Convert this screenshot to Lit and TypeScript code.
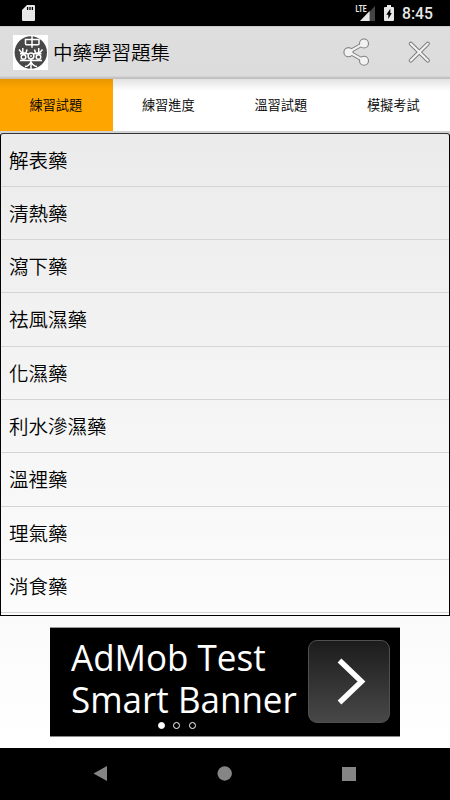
import { LitElement, html, css } from "lit";
import { customElement, state } from "lit/decorators.js";
import { classMap } from "lit/directives/class-map.js";

@customElement("status-bar")
class StatusBar extends LitElement {
  static styles = css`
    :host { display: block; height: 26px; background: #000; }
    svg { display: block; }
    .bar { display: flex; height: 26px; align-items: center; color: #e8e8e8; }
    .card { margin-left: 21px; margin-right: auto; }
    .time { width: 32px; margin: 2px 16px 0 7px; font: 500 15.7px/24px Roboto, sans-serif; white-space: nowrap; }
    .lte { font: 700 9px Roboto, sans-serif; }
  `;
  render() {
    return html`<div class="bar">
      <svg class="card" width="15" height="26" viewBox="21 0 15 26">
        <path fill="#e8e8e8" d="M27 5h7q1 0 1 1v14q0 1-1 1H23q-1 0-1-1V10z" />
        <path stroke="#000" stroke-width="1.3" d="M27.6 7v3M30 7v3M32.4 7v3" />
      </svg>
      <svg width="40" height="26" viewBox="355 0 40 26">
        <path fill="#444" d="M375 6v15h-14.5z" />
        <path fill="#e8e8e8" d="M369.6 11v10h-9.6z" />
        <text class="lte" x="355.6" y="12.4" fill="#e8e8e8" textLength="11" lengthAdjust="spacingAndGlyphs">LTE</text>
        <path fill="#e8e8e8" d="M387 5h4v2h2q1 0 1 1v12q0 1-1 1h-8q-1 0-1-1V8q0-1 1-1h2z" />
        <path fill="#000" d="M390.3 8.7v4.2h1.5l-3.5 6v-4.2h-2z" />
      </svg>
      <span class="time">8:45</span>
    </div>`;
  }
}

@customElement("action-bar")
class ActionBar extends LitElement {
  static styles = css`
    :host { display: block; height: 53px; }
    .bar { box-sizing: border-box; height: 53px; display: flex; align-items: center; padding: 0 18px 1px 13px;
      background: linear-gradient(#c9c9c9 0 1px, #dedede 1px, #dcdcdc 50px, #c9c9c9 51px, #bebebe 53px); }
    svg { display: block; }
    .logo { width: 35px; height: 35px; background: #fff; }
    .title { margin: 4px auto 0 5px; font: 350 19.5px/28px Roboto, "Noto Sans CJK TC", sans-serif; color: #000; }
    .share { margin-right: 36px; }
  `;
  render() {
    return html`<div class="bar">
      <svg class="logo" viewBox="0 0 35 35">
        <circle cx="17.8" cy="17.5" r="16.2" fill="#484848" />
        <g fill="none" stroke="#fff" stroke-width="1.5">
          <path d="M12.5 4.5v4.2q0 1 1 1h11.5q1 0 1-1v-4.2zM19 .8v12" />
          <path d="M6 14.5l3 3.5h4l1-3.5M9.8 13v5M7 18.7h8M29.5 14.5l-3 3.5h-4l-1-3.5M25.7 13v5M20.5 18.7h8" />
          <circle cx="10.5" cy="22" r="2.3" />
          <circle cx="18" cy="21" r="2.9" />
          <circle cx="25.5" cy="22" r="2.3" />
          <path d="M7 25.5h22M18 24v10M18 27q-2 4-6 4.5M18 27q2 4 6 4.5" />
        </g>
        <circle cx="18" cy="21" r=".9" fill="#fff" />
      </svg>
      <span class="title">中藥學習題集</span>
      <svg class="share" width="28" height="30" viewBox="342 37 28 30">
        <path d="M364 43.5L348.5 52L364 60.5" fill="none" stroke="#808080" stroke-width="4" />
        <g fill="#f2f2f2" stroke="#808080" stroke-width="1.1">
          <circle cx="364" cy="43.5" r="4.5" />
          <circle cx="348.5" cy="52.2" r="4.6" />
          <circle cx="364" cy="60.7" r="4.5" />
        </g>
        <path d="M364 43.5L348.5 52L364 60.5" fill="none" stroke="#f2f2f2" stroke-width="2" />
      </svg>
      <svg width="26" height="26" viewBox="406 39 26 26">
        <path d="M410.8 43.8L427.8 60.6M427.8 43.8L410.8 60.6" stroke="#808080" stroke-width="4.2" stroke-linecap="round" />
        <path d="M410.8 43.8L427.8 60.6M427.8 43.8L410.8 60.6" stroke="#f4f4f4" stroke-width="2.1" stroke-linecap="round" />
      </svg>
    </div>`;
  }
}

@customElement("ad-banner")
class AdBanner extends LitElement {
  static styles = css`
    :host { display: block; }
    .ad { position: relative; width: 350px; height: 110px; background: #000; box-sizing: border-box;
      display: flex; justify-content: space-between; padding: 12px 10px 0 20.5px;
      border-top: 1px solid #999; border-bottom: 1px solid #888; }
    .text { width: 230px; margin-top: -3px; color: #fff; font: 36px/41.5px "Open Sans", sans-serif; white-space: nowrap; }
    .line { display: block; width: max-content; transform: scaleX(.972); transform-origin: 0 50%; }
    .go { box-sizing: border-box; width: 82px; height: 83px; border: 1px solid #505050; border-radius: 9px;
      background: linear-gradient(#1c1c1c, #484848); }
    .go svg { display: block; }
    .dots { position: absolute; left: 108px; top: 94px; display: flex; gap: 8.3px; }
    .dot { box-sizing: border-box; width: 7px; height: 7px; border: 1.3px solid #fff; border-radius: 50%; }
    .on { background: #fff; }
  `;
  render() {
    return html`<div class="ad">
      <div class="text"><span class="line">AdMob Test</span><span class="line">Smart Banner</span></div>
      <div class="go">
        <svg width="80" height="81" viewBox="0 0 80 81">
          <path d="M30.5 19.5L52.5 40.5L30.5 61.5" fill="none" stroke="#fff" stroke-width="5.4" />
        </svg>
      </div>
      <div class="dots">${[0, 1, 2].map((i) => html`<span class=${classMap({ dot: true, on: i === 0 })}></span>`)}</div>
    </div>`;
  }
}

@customElement("app-root")
class AppRoot extends LitElement {
  static styles = css`
    :host { display: block; width: 450px; height: 800px; overflow: hidden; color: #000;
      font-family: Roboto, "Noto Sans CJK TC", sans-serif; font-weight: 350; }
    .screen { display: flex; flex-direction: column; height: 800px; }
    .tabs { display: grid; grid-template-columns: repeat(4, 1fr); height: 52px; flex: none; background: #fff; }
    .tab { box-sizing: border-box; padding: 0 1px 1px 0; display: flex; align-items: center; justify-content: center;
      font-size: 13.2px; background: linear-gradient(#e2e2e2, #fff 12px); }
    .selected { background: linear-gradient(#e89600, #ffa500 10px); }
    .body { flex: 1; display: flex; flex-direction: column; align-items: center; padding-top: 2px;
      background: linear-gradient(#d2d2d2 0 2px, #e9e9e9 2px, #fff); }
    .list { box-sizing: border-box; width: 450px; height: 483px; flex: none; border: 1.4px solid #000; border-top-color: #333;
      border-radius: 3px 3px 0 0; overflow: hidden; margin-bottom: 11px; background: linear-gradient(#ebebeb, #fcfcfc); }
    .row { box-sizing: border-box; height: 53.33px; border-bottom: 1px solid #d4d4d4; padding: 4px 0 0 8px;
      display: flex; align-items: center; font-size: 19.5px; line-height: 28px; }
    .row:first-child { height: 52.6px; }
    .nav { height: 52px; flex: none; background: #000; }
    .nav svg { display: block; }
  `;
  @state() private tab = 0;
  private tabs = ["練習試題", "練習進度", "溫習試題", "模擬考試"];
  private items = ["解表藥", "清熱藥", "瀉下藥", "祛風濕藥", "化濕藥", "利水滲濕藥", "溫裡藥", "理氣藥", "消食藥"];
  render() {
    return html`<div class="screen">
      <status-bar></status-bar>
      <action-bar></action-bar>
      <div class="tabs">
        ${this.tabs.map((t, i) => html`<div class=${classMap({ tab: true, selected: i === this.tab })} @click=${() => (this.tab = i)}>${t}</div>`)}
      </div>
      <div class="body">
        <div class="list">${this.items.map((t) => html`<div class="row">${t}</div>`)}</div>
        <ad-banner></ad-banner>
      </div>
      <div class="nav">
        <svg width="450" height="52" viewBox="0 748 450 52" fill="#858585">
          <path d="M107 766v15L93.5 773.5z" />
          <circle cx="224.7" cy="773.5" r="7.2" />
          <path d="M342 767h14v14h-14z" />
        </svg>
      </div>
    </div>`;
  }
}
